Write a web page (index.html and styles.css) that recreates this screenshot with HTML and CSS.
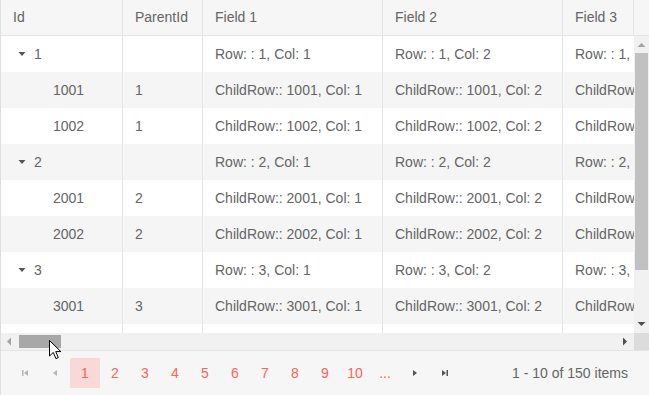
FILE: index.html
```html
<!DOCTYPE html>
<html lang="en">
<head>
    <meta charset="UTF-8">
    <meta name="viewport" content="width=device-width, initial-scale=1.0">
    <title>TreeList</title>
    <link rel="stylesheet" href="styles.css">
</head>
<body>
    <div class="grid">
        <!-- Header -->
        <div class="grid-header">
            <div class="header-wrap">
                <div class="row head">
                    <div class="cell">Id</div>
                    <div class="cell">ParentId</div>
                    <div class="cell">Field 1</div>
                    <div class="cell">Field 2</div>
                    <div class="cell">Field 3</div>
                </div>
            </div>
            <div class="header-filler"></div>
        </div>

        <!-- Body -->
        <div class="grid-main">
            <div class="grid-content">
                <div class="row">
                    <div class="cell"><span class="toggle"><svg width="16" height="16" viewBox="0 0 16 16"><path d="M4.5 6h7l-3.5 4z" fill="#555"/></svg></span>1</div>
                    <div class="cell"></div>
                    <div class="cell">Row: : 1, Col: 1</div>
                    <div class="cell">Row: : 1, Col: 2</div>
                    <div class="cell">Row: : 1, Col: 3</div>
                </div>
                <div class="row alt">
                    <div class="cell"><span class="indent"></span>1001</div>
                    <div class="cell">1</div>
                    <div class="cell">ChildRow:: 1001, Col: 1</div>
                    <div class="cell">ChildRow:: 1001, Col: 2</div>
                    <div class="cell">ChildRow:: 1001, Col: 3</div>
                </div>
                <div class="row">
                    <div class="cell"><span class="indent"></span>1002</div>
                    <div class="cell">1</div>
                    <div class="cell">ChildRow:: 1002, Col: 1</div>
                    <div class="cell">ChildRow:: 1002, Col: 2</div>
                    <div class="cell">ChildRow:: 1002, Col: 3</div>
                </div>
                <div class="row alt">
                    <div class="cell"><span class="toggle"><svg width="16" height="16" viewBox="0 0 16 16"><path d="M4.5 6h7l-3.5 4z" fill="#555"/></svg></span>2</div>
                    <div class="cell"></div>
                    <div class="cell">Row: : 2, Col: 1</div>
                    <div class="cell">Row: : 2, Col: 2</div>
                    <div class="cell">Row: : 2, Col: 3</div>
                </div>
                <div class="row">
                    <div class="cell"><span class="indent"></span>2001</div>
                    <div class="cell">2</div>
                    <div class="cell">ChildRow:: 2001, Col: 1</div>
                    <div class="cell">ChildRow:: 2001, Col: 2</div>
                    <div class="cell">ChildRow:: 2001, Col: 3</div>
                </div>
                <div class="row alt">
                    <div class="cell"><span class="indent"></span>2002</div>
                    <div class="cell">2</div>
                    <div class="cell">ChildRow:: 2002, Col: 1</div>
                    <div class="cell">ChildRow:: 2002, Col: 2</div>
                    <div class="cell">ChildRow:: 2002, Col: 3</div>
                </div>
                <div class="row">
                    <div class="cell"><span class="toggle"><svg width="16" height="16" viewBox="0 0 16 16"><path d="M4.5 6h7l-3.5 4z" fill="#555"/></svg></span>3</div>
                    <div class="cell"></div>
                    <div class="cell">Row: : 3, Col: 1</div>
                    <div class="cell">Row: : 3, Col: 2</div>
                    <div class="cell">Row: : 3, Col: 3</div>
                </div>
                <div class="row alt">
                    <div class="cell"><span class="indent"></span>3001</div>
                    <div class="cell">3</div>
                    <div class="cell">ChildRow:: 3001, Col: 1</div>
                    <div class="cell">ChildRow:: 3001, Col: 2</div>
                    <div class="cell">ChildRow:: 3001, Col: 3</div>
                </div>
                <div class="row">
                    <div class="cell"><span class="indent"></span>3002</div>
                    <div class="cell">3</div>
                    <div class="cell">ChildRow:: 3002, Col: 1</div>
                    <div class="cell">ChildRow:: 3002, Col: 2</div>
                    <div class="cell">ChildRow:: 3002, Col: 3</div>
                </div>
            </div>
            <div class="vscroll">
                <div class="sb-btn"><svg width="15" height="17" viewBox="0 0 15 17"><path d="M3.5 11h8l-4-4z" fill="#a3a3a3"/></svg></div>
                <div class="vthumb"></div>
                <div class="vtrack"></div>
                <div class="sb-btn"><svg width="15" height="17" viewBox="0 0 15 17"><path d="M3.5 6h8l-4 4z" fill="#505050"/></svg></div>
            </div>
        </div>

        <!-- Horizontal scrollbar -->
        <div class="hscroll-row">
            <div class="hscroll">
                <div class="hb-btn"><svg width="17" height="17" viewBox="0 0 17 17"><path d="M10 4.5v8l-4-4z" fill="#a3a3a3"/></svg></div>
                <div class="hthumb"></div>
                <div class="htrack"></div>
                <div class="hb-btn"><svg width="17" height="17" viewBox="0 0 17 17"><path d="M6 4.5v8l4-4z" fill="#505050"/></svg></div>
            </div>
            <div class="corner"></div>
        </div>

        <!-- Pager -->
        <div class="pager">
            <div class="pages">
                <span class="pg-btn"><svg width="16" height="16" viewBox="0 0 16 16"><path d="M5 5h1.5v6H5zM11 5v6L7 8z" fill="#b5b5b5"/></svg></span>
                <span class="pg-btn"><svg width="16" height="16" viewBox="0 0 16 16"><path d="M10 5v6L6 8z" fill="#b5b5b5"/></svg></span>
                <span class="pg-num selected">1</span>
                <span class="pg-num">2</span>
                <span class="pg-num">3</span>
                <span class="pg-num">4</span>
                <span class="pg-num">5</span>
                <span class="pg-num">6</span>
                <span class="pg-num">7</span>
                <span class="pg-num">8</span>
                <span class="pg-num">9</span>
                <span class="pg-num">10</span>
                <span class="pg-num">...</span>
                <span class="pg-btn"><svg width="16" height="16" viewBox="0 0 16 16"><path d="M6 5v6l4-3z" fill="#555"/></svg></span>
                <span class="pg-btn"><svg width="16" height="16" viewBox="0 0 16 16"><path d="M5 5v6l4-3zM9.5 5H11v6H9.5z" fill="#555"/></svg></span>
            </div>
            <div class="pager-info">1 - 10 of 150 items</div>
        </div>

        <svg class="cursor" width="13" height="20" viewBox="0 0 13 20"><path d="M0.5 0.5v15.5l3.8-3.6 2.6 6.2 2.4-1-2.6-6h5.2z" fill="#fff" stroke="#000" stroke-width="1" stroke-linejoin="round"/></svg>
    </div>
</body>
</html>
```

FILE: styles.css
```css
body {
    margin: 0;
    overflow: hidden;
    font-family: Arial, "Liberation Sans", sans-serif;
    font-size: 14px;
    color: #656565;
}
.grid {
    position: relative;
    width: 649px;
    height: 395px;
    box-sizing: border-box;
    border-left: 1px solid #dedede;
    display: flex;
    flex-direction: column;
    background: #fff;
}
.grid-header {
    display: flex;
    height: 36px;
    background: #f6f6f6;
    border-bottom: 1px solid #e4e4e4;
    box-sizing: border-box;
}
.header-wrap {
    width: 632px;
    overflow: hidden;
    border-right: 1px solid #e4e4e4;
}
.header-filler {
    flex: 1;
}
.row {
    display: grid;
    grid-template-columns: 122px 80px 180px 180px 180px;
    height: 36px;
    width: 742px;
}
.row.head {
    height: 35px;
}
.row.alt {
    background: #f5f5f5;
}
.cell {
    box-sizing: border-box;
    border-right: 1px solid #e4e4e4;
    padding: 0 12px;
    line-height: 36px;
    white-space: nowrap;
    overflow: hidden;
    display: flex;
    align-items: center;
}
.head .cell {
    line-height: 35px;
}
.toggle {
    display: inline-block;
    width: 16px;
    height: 16px;
    margin-left: 1px;
    margin-right: 4px;
}
.toggle svg {
    display: block;
}
.indent {
    display: inline-block;
    width: 40px;
}
.grid-main {
    display: flex;
    height: 297px;
}
.grid-content {
    width: 633px;
    overflow: hidden;
}
.vscroll {
    width: 15px;
    background: #f1f1f1;
    display: flex;
    flex-direction: column;
}
.sb-btn {
    height: 17px;
}
.sb-btn svg, .hb-btn svg {
    display: block;
}
.vthumb {
    height: 217px;
    margin: 0 1px;
    background: #c1c1c1;
}
.vtrack {
    flex: 1;
}
.hscroll-row {
    display: flex;
    height: 17px;
}
.hscroll {
    width: 633px;
    background: #f1f1f1;
    display: flex;
    align-items: center;
}
.hb-btn {
    width: 17px;
    height: 17px;
}
.hthumb {
    width: 42px;
    height: 13px;
    margin-left: 1px;
    background: #a8a8a8;
}
.htrack {
    flex: 1;
}
.corner {
    flex: 1;
    background: #dcdcdc;
}
.pager {
    flex: 1;
    display: flex;
    align-items: center;
    justify-content: space-between;
    background: #f6f6f6;
    border-top: 1px solid #e4e4e4;
    padding: 0 21px 0 9px;
}
.pages {
    display: flex;
    align-items: center;
}
.pg-btn, .pg-num {
    width: 30px;
    height: 30px;
    display: flex;
    align-items: center;
    justify-content: center;
}
.pg-num {
    color: #ff6358;
}
.pg-num.selected {
    background: #f9d9d7;
}
.pager-info {
    color: #656565;
}
.cursor {
    position: absolute;
    left: 48px;
    top: 340px;
}
```
